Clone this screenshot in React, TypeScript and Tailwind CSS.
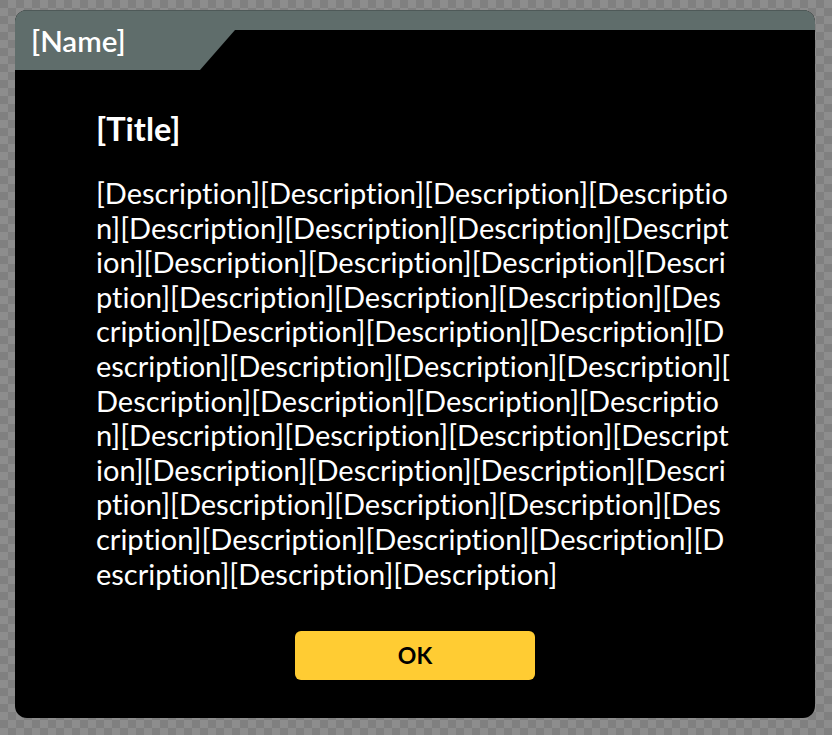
const desc = Array(45).fill('[Description]').join('');

export default function App() {
  return (
    <div
      className="w-[832px] h-[735px] pt-[10px] pl-[15px] bg-[conic-gradient(#8d8d8d_25%,#808080_0_50%,#8d8d8d_0_75%,#808080_0)] bg-size-[16px_16px]"
      style={{ fontFamily: 'Lato, "Open Sans", sans-serif', fontVariantLigatures: 'none' }}
    >
      <div className="w-[800px] h-[708px] rounded-[12px] overflow-hidden bg-black flex flex-col">
        {/* header tab */}
        <div className="flex h-[60px] bg-[#5f6d6b] border-t border-[#4e5958]">
          <div className="w-[185px] pl-[16px] pt-[15px] text-[29.5px] font-semibold text-white leading-none">
            [Name]
          </div>
          <div className="self-end h-[40px] flex-1 bg-black [clip-path:polygon(35px_0,100%_0,100%_100%,0_100%)]" />
        </div>

        <div className="flex-1 flex flex-col pl-[81px] pt-[40px]">
          <h2 className="text-[32.5px] font-bold text-white leading-[38px]">[Title]</h2>
          <p className="mt-[28px] w-[638.5px] text-[29px] leading-[34.6px] text-white break-all [line-break:anywhere]">
            {desc}
          </p>
          <div className="flex justify-center mt-[40px] w-[638px]">
            <button className="w-[240px] h-[49px] rounded-[6px] bg-[#ffcc33] text-[23px] font-bold text-black">
              OK
            </button>
          </div>
        </div>
      </div>
    </div>
  );
}
